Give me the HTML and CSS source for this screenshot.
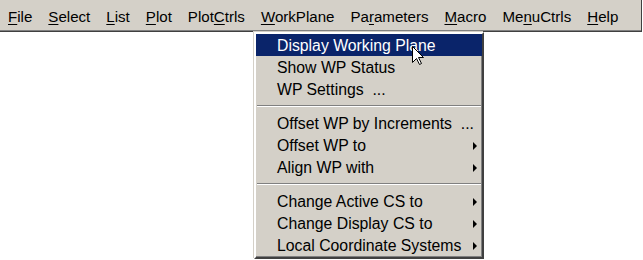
FILE: index.html
```html
<!DOCTYPE html>
<html lang="en">
<head>
    <meta charset="UTF-8">
    <title>WorkPlane Menu</title>
    <link rel="stylesheet" href="styles.css">
</head>
<body>
    <div class="menubar">
        <span class="menu-title"><u>F</u>ile</span>
        <span class="menu-title"><u>S</u>elect</span>
        <span class="menu-title"><u>L</u>ist</span>
        <span class="menu-title"><u>P</u>lot</span>
        <span class="menu-title">Plot<u>C</u>trls</span>
        <span class="menu-title"><u>W</u>orkPlane</span>
        <span class="menu-title">Pa<u>r</u>ameters</span>
        <span class="menu-title"><u>M</u>acro</span>
        <span class="menu-title">Me<u>n</u>uCtrls</span>
        <span class="menu-title"><u>H</u>elp</span>
    </div>

    <div class="dropdown">
        <div class="item selected">Display Working Plane</div>
        <div class="item">Show WP Status</div>
        <div class="item">WP Settings &nbsp;...</div>
        <div class="separator"></div>
        <div class="item">Offset WP by Increments &nbsp;...</div>
        <div class="item">Offset WP to <span class="arrow"></span></div>
        <div class="item">Align WP with <span class="arrow"></span></div>
        <div class="separator"></div>
        <div class="item">Change Active CS to <span class="arrow"></span></div>
        <div class="item">Change Display CS to <span class="arrow"></span></div>
        <div class="item">Local Coordinate Systems <span class="arrow"></span></div>
    </div>

    <!-- mouse pointer over the first item -->
    <svg class="cursor" width="13" height="20" viewBox="0 0 13 20">
        <path d="M0.5 0.5 L0.5 16.5 L4.5 12.5 L7.5 18.5 L9.5 17.5 L6.5 11.5 L11.5 11.5 Z" fill="#fff" stroke="#000" stroke-width="1"/>
    </svg>
</body>
</html>
```

FILE: styles.css
```css
* {
    margin: 0;
    padding: 0;
    box-sizing: border-box;
}

body {
    font-family: "Liberation Sans", Arial, sans-serif;
    font-size: 15px;
    background-color: #fff;
    color: #000;
    width: 643px;
    height: 260px;
    position: relative;
    overflow: hidden;
}

.menubar {
    display: flex;
    width: 642px;
    height: 32px;
    background-color: #d4d0c8;
    border-right: 1px solid #404040;
    border-bottom: 1px solid #404040;
    box-shadow: inset 0 -1px 0 #808080;
}

.menu-title {
    padding: 4px 8px 0;
    line-height: 26px;
    font-size: 15.1px;
    white-space: pre;
}

.menu-title u {
    text-underline-offset: 2px;
}

.dropdown {
    position: absolute;
    left: 254px;
    top: 32px;
    width: 230px;
    background-color: #d4d0c8;
    border-top: 2px solid #fff;
    border-left: 2px solid #fff;
    border-right: 2px solid #404040;
    border-bottom: 2px solid #404040;
    box-shadow: inset -1px -1px 0 #808080, -1px -1px 0 #d4d0c8;
    padding-bottom: 1px;
}

.item {
    display: flex;
    justify-content: space-between;
    align-items: center;
    height: 22px;
    padding: 1px 5px 0 21px;
    font-size: 15.8px;
    line-height: 21px;
    white-space: pre;
}

.item.selected {
    background-color: #0a246a;
    color: #fff;
}

.arrow {
    width: 0;
    height: 0;
    border-top: 4px solid transparent;
    border-bottom: 4px solid transparent;
    border-left: 4px solid #000;
}

.separator {
    height: 2px;
    margin: 5px 1px;
    border-top: 1px solid #808080;
    border-bottom: 1px solid #fff;
}

.cursor {
    position: absolute;
    left: 412px;
    top: 46px;
}
```
